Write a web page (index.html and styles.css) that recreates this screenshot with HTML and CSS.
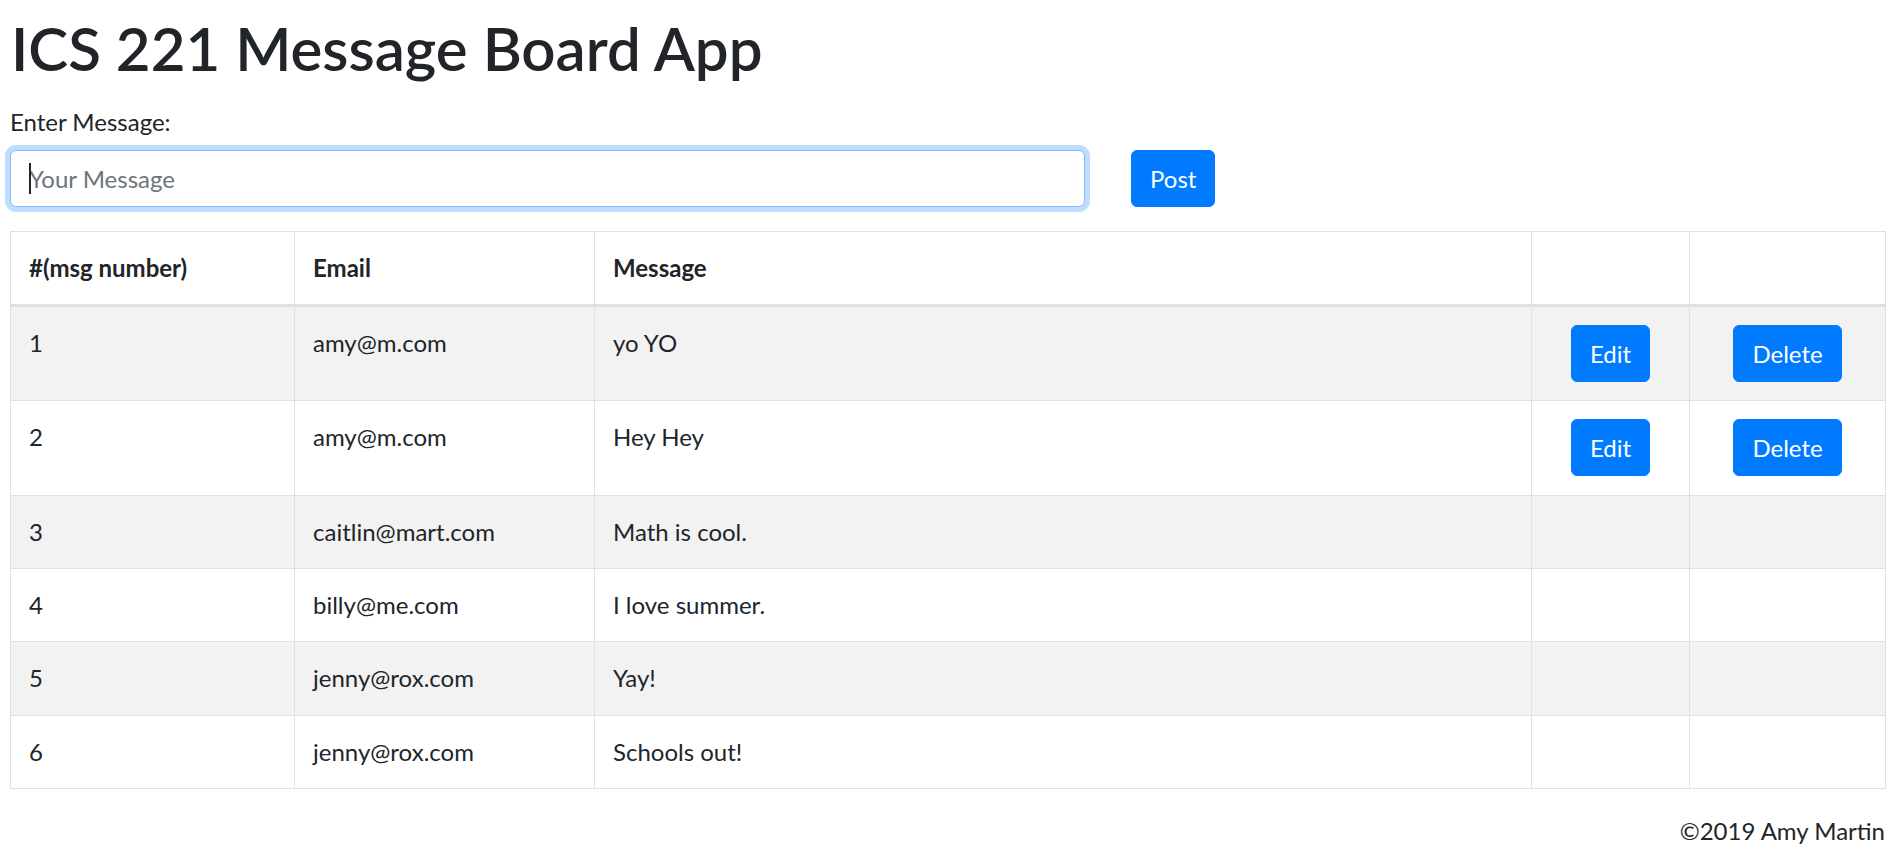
FILE: index.html
```html
<!DOCTYPE html>
<html lang="en">
<head>
<meta charset="utf-8">
<title>ICS 221 Message Board App</title>
<link rel="stylesheet" href="styles.css">
</head>
<body>
<div class="page">
  <h1 class="title">ICS 221 Message Board App</h1>
  <form class="msg-form">
    <label class="msg-label" for="msg">Enter Message:</label>
    <div class="msg-row">
      <div class="input-wrap">
        <input id="msg" class="msg-input" type="text" placeholder="Your Message">
        <span class="caret"></span>
      </div>
      <button type="button" class="btn">Post</button>
    </div>
  </form>
  <table class="board">
    <colgroup>
      <col class="c-num"><col class="c-email"><col class="c-msg"><col class="c-edit"><col class="c-del">
    </colgroup>
    <thead>
      <tr><th>#(msg number)</th><th>Email</th><th>Message</th><th></th><th></th></tr>
    </thead>
    <tbody>
      <tr><td>1</td><td>amy@m.com</td><td>yo YO</td><td class="act"><button type="button" class="btn">Edit</button></td><td class="act"><button type="button" class="btn">Delete</button></td></tr>
      <tr><td>2</td><td>amy@m.com</td><td>Hey Hey</td><td class="act"><button type="button" class="btn">Edit</button></td><td class="act"><button type="button" class="btn">Delete</button></td></tr>
      <tr><td>3</td><td>caitlin@mart.com</td><td>Math is cool.</td><td></td><td></td></tr>
      <tr><td>4</td><td>billy@me.com</td><td>I love summer.</td><td></td><td></td></tr>
      <tr><td>5</td><td>jenny@rox.com</td><td>Yay!</td><td></td><td></td></tr>
      <tr><td>6</td><td>jenny@rox.com</td><td>Schools out!</td><td></td><td></td></tr>
    </tbody>
  </table>
  <footer class="footer">©2019 Amy Martin</footer>
</div>
</body>
</html>
```
FILE: styles.css
```css
html, body {
  margin: 0;
  padding: 0;
  background: #fff;
}
body {
  font-family: Lato, "Open Sans", sans-serif;
  font-size: 24px;
  line-height: 36px;
  color: #212529;
}
.page {
  padding: 12px 15px 0 10px;
}
.title {
  margin: 0 0 20px 1px;
  font-size: 60px;
  line-height: 72px;
  font-weight: 600;
  color: #212529;
}
.msg-form {
  margin: 0 0 24px 0;
}
.msg-label {
  display: block;
  margin: 0 0 10px 0;
}
.msg-row {
  display: flex;
  align-items: flex-start;
  gap: 46px;
}
.input-wrap {
  position: relative;
  width: 1075px;
}
.msg-input {
  box-sizing: border-box;
  display: block;
  width: 100%;
  height: 57px;
  padding: 9px 18px;
  font-family: inherit;
  font-size: 24px;
  line-height: 36px;
  color: #495057;
  background: #fff;
  border: 1.5px solid #80bdff;
  border-radius: 6px;
  box-shadow: 0 0 0 5px rgba(0, 123, 255, 0.25);
  outline: none;
}
.msg-input::placeholder {
  color: #6c757d;
  opacity: 1;
}
.caret {
  position: absolute;
  left: 19px;
  top: 13px;
  width: 1.5px;
  height: 31px;
  background: #212529;
}
.btn {
  box-sizing: border-box;
  display: inline-block;
  height: 57px;
  padding: 9px 18px;
  font-family: inherit;
  font-size: 24px;
  line-height: 36px;
  font-weight: 400;
  color: #fff;
  background: #007bff;
  border: 1.5px solid #007bff;
  border-radius: 6px;
  vertical-align: middle;
  cursor: pointer;
}
.board {
  width: 1875px;
  table-layout: fixed;
  border-collapse: collapse;
  border: 1px solid #dee2e6;
  margin: 0 0 24px 0;
}
.c-num { width: 284px; }
.c-email { width: 300px; }
.c-msg { width: 937px; }
.c-edit { width: 158px; }
.c-del { width: 196px; }
.board th,
.board td {
  padding: 18px;
  border: 1px solid #dee2e6;
  text-align: left;
  vertical-align: top;
}
.board td {
  padding-bottom: 18.35px;
}
.board th {
  font-weight: 700;
  border-bottom: 3px solid #dee2e6;
}
.board tbody tr:nth-child(odd) {
  background: #f2f2f2;
}
.board td.act {
  text-align: center;
  line-height: 0;
}
.footer {
  text-align: right;
}
```
